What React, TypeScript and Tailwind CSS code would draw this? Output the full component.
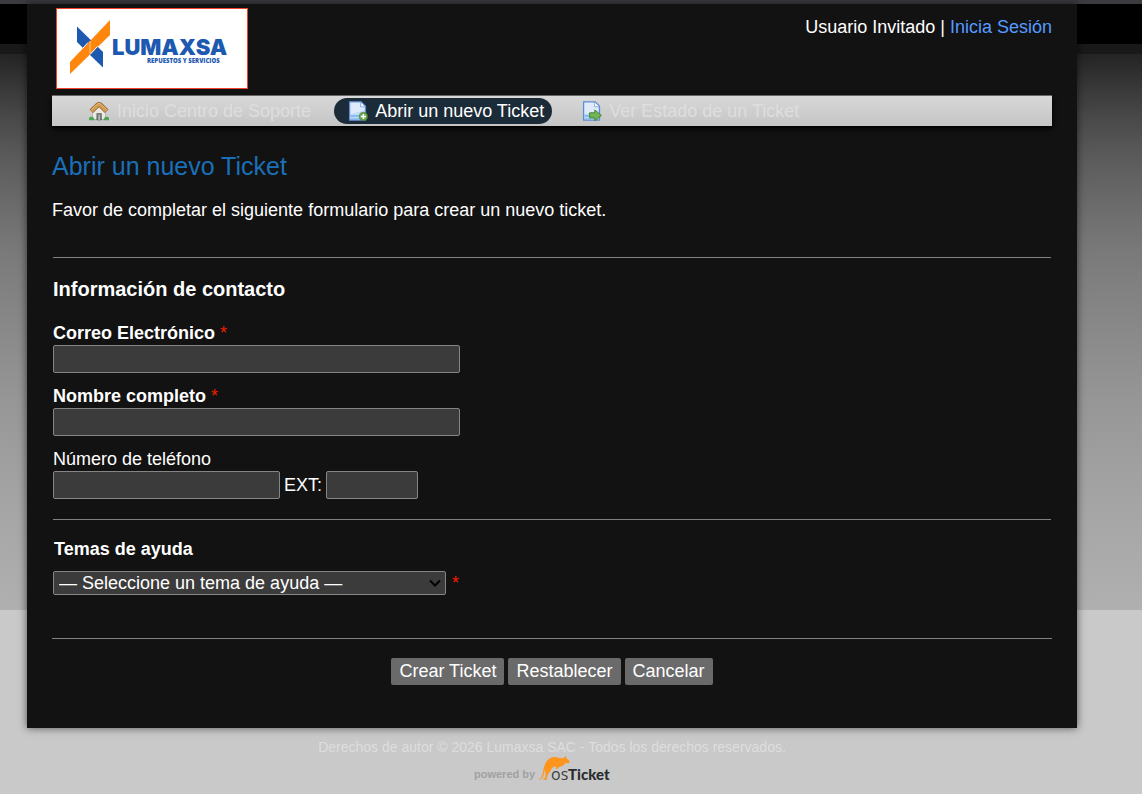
import { ReactNode } from 'react';

const HouseIcon = () => (
  <svg className="w-5 h-5 shrink-0" viewBox="0 0 20 20" aria-hidden="true">
    <path d="M3.500 10 10 4.500l6.500 5.500v8.500h-13z" fill="#ebe8e4" stroke="#aaa49c" strokeWidth="0.7" />
    <path d="M0 19.300v-2.600c1.500-1.600 3.500-1.200 4.700 0l1 2.600zM20 19.300v-2.600c-1.500-1.600-3.500-1.200-4.700 0l-1 2.600z" fill="#4ea558" />
    <path d="M7.800 19v-6.500h4.600V19z" fill="#777" stroke="#5c5c5c" strokeWidth="0.6" />
    <path d="M9.400 19v-5.200h1.500V19z" fill="#bdbdbd" />
    <path d="M2.300 10.300 8.600 4.200q1.400-1.300 2.800 0l6.300 6.100" fill="none" stroke="#8f6432" strokeWidth="5" strokeLinejoin="round" />
    <path d="M2.600 10 8.600 4.200q1.400-1.300 2.800 0L17.400 10" fill="none" stroke="#d29a52" strokeWidth="3.600" strokeLinejoin="round" />
    <path d="M2 9 8.400 3q1.600-1.200 3.200 0L18 9" fill="none" stroke="#e6b777" strokeWidth="1" />
  </svg>
);

const PageIcon = ({ children }: { children: ReactNode }) => (
  <svg className="w-5 h-5 shrink-0" viewBox="0 0 20 20" aria-hidden="true">
    <path d="M1.600.8h11.400l4.500 4.400v14H1.600z" fill="#c5daf4" stroke="#5f8bd0" strokeWidth="1.300" strokeLinejoin="round" />
    <path d="M2.600 1.800h9.600v4.400h4.300v3L2.600 13z" fill="#dfebfa" />
    <path d="M12.600 1.200v4.600h4.600" fill="#f6faff" stroke="#88acdd" strokeWidth="0.9" />
    <path d="M3 14.300h9v1.400H3z" fill="#64b0f0" />
    <path d="M3 17h9v1.200H3z" fill="#8cc6f5" />
    {children}
  </svg>
);

const PageAddIcon = () => (
  <PageIcon>
    <circle cx="15.400" cy="15.500" r="4.100" fill="#6aa64c" stroke="#467a35" strokeWidth="0.7" />
    <path d="M15.400 12.900v5.200M12.800 15.500H18" stroke="#fff" strokeWidth="1.600" />
  </PageIcon>
);

const PageGoIcon = () => (
  <PageIcon>
    <path d="M7.600 11.800h5.200V8.900l6.600 5.500-6.600 5.500v-3H7.600z" fill="#74b354" stroke="#43822f" strokeWidth="0.9" strokeLinejoin="round" />
  </PageIcon>
);

const CompanyLogo = () => (
  <svg className="block w-48 h-[81px]" viewBox="0 0 192 81" role="img" aria-label="Lumaxsa">
    <rect x="0.5" y="0.5" width="191" height="80" fill="#fff" stroke="#f0432c" />
    <path d="M21 18.500 47 44v15.500L34 47 21 34z" fill="#1d59b1" />
    <path d="M14 54 54 12v15L14 66z" fill="#ff860d" />
    <path d="M32 34.500 27 40M41.500 38.500 34 46.500" stroke="#fff" strokeWidth="1" />
    <path d="M34 33v12" stroke="#ffc98c" strokeWidth="1" />
    <text x="56" y="47" fontSize="22" fontWeight="900" fill="#1d59b1" className="font-['Inter',sans-serif]">
      LUMAXSA
    </text>
    <text x="91" y="55" fontSize="6" fontWeight="800" fill="#1d59b1" className="font-['Open_Sans',sans-serif]">
      REPUESTOS Y SERVICIOS
    </text>
  </svg>
);

const OsTicketLogo = () => (
  <svg className="block w-[138px] h-[29px]" viewBox="0 0 138 29" role="img" aria-label="powered by osTicket">
    <text x="1" y="22" fontSize="11" fontWeight="700" fill="#a0a0a0" className="font-['Liberation_Sans',Arial,sans-serif]">
      powered by
    </text>
    <path
      d="M65 23.500c4-1 4.500-4.500 5.200-8.500C71 8 74.500 1.500 81 1c4-.3 6.500 2 9.500 1L92.800 0l.7 2.200L97 5.600l-1 1.300-4 .3c-1 2.300-3 3.300-5.500 3.600l-2.500 2.400-1.400-.6 1-2.200c-3-.2-4.600 1.200-5.600 3.600-.8 2-2.500 3-3.300 5l-1.200 4.800h-3.300l.2-1.200 1.700-.7.600-4.400-.9-3.500c-1 5-1.600 9.800-6.800 9.500z"
      fill="#ff951c"
    />
    <text x="78" y="24" fontSize="16" fill="#3d3d3d" className="font-['Open_Sans',sans-serif]">
      os
    </text>
    <text x="95" y="24" fontSize="15" fontWeight="900" fill="#292d30" className="font-['Lato',sans-serif]">
      Ticket
    </text>
  </svg>
);

const Required = () => <span className="font-normal text-[#f21d00]">*</span>;

const fieldClass = 'block h-7 px-1 bg-[#3b3b3b] border border-[#858585] rounded-xs text-white';

type FieldProps = { id: string; label: string; type: string };

const RequiredField = ({ id, label, type }: FieldProps) => (
  <div>
    <label htmlFor={id} className="block font-bold">
      {label} <Required />
    </label>
    <input id={id} type={type} required className={`${fieldClass} w-[407px] max-w-full`} />
  </div>
);

const Header = () => (
  <header className="flex justify-between items-start pt-1 pl-1">
    <a href="#inicio">
      <CompanyLogo />
    </a>
    <p className="pt-[7px]">
      Usuario Invitado | <a href="#login" className="text-[#559bff]">Inicia Sesión</a>
    </p>
  </header>
);

const Nav = () => (
  <nav className="mt-[6px] h-[31px] flex items-center gap-2 pl-[22px] border-t border-[#666] bg-linear-to-b from-[#d8d8d8] to-[#c5c5c5] text-[#dedede] shadow-[0_3px_5px_#000]">
    <a href="#inicio" className="flex items-center gap-2 h-[26px] px-[15px] rounded-full">
      <HouseIcon />
      Inicio Centro de Soporte
    </a>
    <a href="#abrir" className="flex items-center gap-[7px] h-[26px] pl-[14px] pr-2 rounded-full bg-[#1c2b38] text-white">
      <PageAddIcon />
      Abrir un nuevo Ticket
    </a>
    <a href="#estado" className="flex items-center gap-[7px] h-[26px] pl-[22px] pr-2 rounded-full">
      <PageGoIcon />
      Ver Estado de un Ticket
    </a>
  </nav>
);

const buttonClass = 'h-[27px] px-2 pb-px rounded-xs bg-[#6a6a6a] text-white';

const TicketForm = () => (
  <form onSubmit={(e) => e.preventDefault()}>
    <div className="px-px">
      <section className="mt-[35px] pt-[17px] border-t border-[#808080]">
        <h2 className="text-xl leading-7 font-bold">Información de contacto</h2>
        <div className="mt-[18px] flex flex-col gap-[11px]">
          <RequiredField id="email" label="Correo Electrónico" type="email" />
          <RequiredField id="name" label="Nombre completo" type="text" />
          <div>
            <label htmlFor="phone" className="block">Número de teléfono</label>
            <div className="flex items-center gap-1">
              <input id="phone" type="tel" className={`${fieldClass} w-[227px]`} />
              <label htmlFor="ext">EXT:</label>
              <input id="ext" type="text" className={`${fieldClass} w-[92px]`} />
            </div>
          </div>
        </div>
      </section>

      <section className="mt-5 pt-[17px] border-t border-[#808080]">
        <label htmlFor="topic" className="block pl-px font-bold">Temas de ayuda</label>
        <div className="mt-[10px] flex items-start gap-[6px]">
          <div className="relative">
            <select
              id="topic"
              required
              className="block appearance-none w-[393px] h-6 pl-[5px] leading-[22px] bg-[#3b3b3b] border border-[#858585] rounded-xs text-white"
            >
              <option>— Seleccione un tema de ayuda —</option>
            </select>
            <svg className="absolute right-[5px] top-2 w-3 h-2 pointer-events-none" viewBox="0 0 12 8" aria-hidden="true">
              <path d="m1 1.500 5 5 5-5" fill="none" stroke="#000" strokeWidth="2" />
            </svg>
          </div>
          <Required />
        </div>
      </section>
    </div>

    <div className="mt-[43px] pt-[19px] border-t border-[#808080] flex justify-center gap-1">
      <button type="submit" className={buttonClass}>Crear Ticket</button>
      <button type="reset" className={buttonClass}>Restablecer</button>
      <button type="button" className={buttonClass}>Cancelar</button>
    </div>
  </form>
);

const Footer = () => (
  <footer className="pt-[10px] flex flex-col items-center text-sm leading-[18px] text-[#dedede]">
    <p>Derechos de autor © 2026 Lumaxsa SAC - Todos los derechos reservados.</p>
    <a href="#osticket" className="pr-5">
      <OsTicketLogo />
    </a>
  </footer>
);

export default function App() {
  return (
    <div className="min-h-screen bg-[#c9c9c9] font-['Liberation_Sans',Arial,sans-serif] text-lg leading-6 text-white">
      <div className="min-h-screen border-t-4 border-[#3b3b40] pl-[27px] pr-[65px] bg-no-repeat bg-[linear-gradient(#000_40px,#191919_40px,#191919_50px,#242424_50px,#2d2d2d_65px,#3b3b3b_88px,#484848_112px,#555_140px,#5d5d5d_160px,#6b6b6b_200px,#797979_245px,#828282_290px,#979797_400px,#a5a5a5_500px,#b0b0b0_606px,#c9c9c9_606px)]">
        <div className="px-[25px] pb-[43px] bg-[#121212] shadow-[0_0_8px_rgba(0,0,0,0.6)]">
          <Header />
          <Nav />
          <main>
            <h1 className="mt-6 text-[25px] leading-8 text-[#1a70b8]">Abrir un nuevo Ticket</h1>
            <p className="mt-4">Favor de completar el siguiente formulario para crear un nuevo ticket.</p>
            <TicketForm />
          </main>
        </div>
        <Footer />
      </div>
    </div>
  );
}
